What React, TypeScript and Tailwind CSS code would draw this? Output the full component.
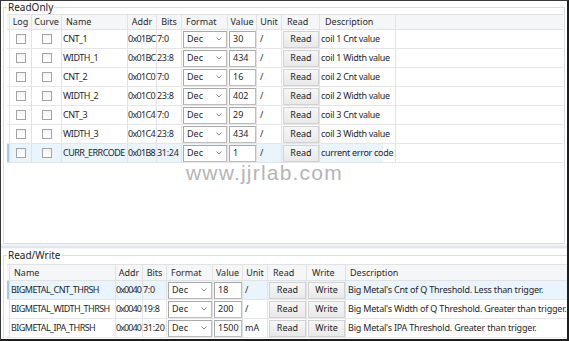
import React from 'react';

type TopRow = { name: string; addr: string; bits: string; value: string; desc: string; sel?: boolean };
type RwRow = { name: string; addr: string; bits: string; value: string; unit: string; desc: string; sel?: boolean };

const topRows: TopRow[] = [
    { name: 'CNT_1', addr: '0x01BC', bits: '7:0', value: '30', desc: 'coil 1 Cnt value' },
    { name: 'WIDTH_1', addr: '0x01BC', bits: '23:8', value: '434', desc: 'coil 1  Width value' },
    { name: 'CNT_2', addr: '0x01C0', bits: '7:0', value: '16', desc: 'coil 2 Cnt value' },
    { name: 'WIDTH_2', addr: '0x01C0', bits: '23:8', value: '402', desc: 'coil 2  Width value' },
    { name: 'CNT_3', addr: '0x01C4', bits: '7:0', value: '29', desc: 'coil 3 Cnt value' },
    { name: 'WIDTH_3', addr: '0x01C4', bits: '23:8', value: '434', desc: 'coil 3  Width value' },
    { name: 'CURR_ERRCODE', addr: '0x01B8', bits: '31:24', value: '1', desc: 'current error code', sel: true },
];

const rwRows: RwRow[] = [
    { name: 'BIGMETAL_CNT_THRSH', addr: '0x0040', bits: '7:0', value: '18', unit: '/', desc: "Big Metal's Cnt of Q Threshold. Less than trigger.", sel: true },
    { name: 'BIGMETAL_WIDTH_THRSH', addr: '0x0040', bits: '19:8', value: '200', unit: '/', desc: "Big Metal's Width of Q Threshold. Greater than trigger." },
    { name: 'BIGMETAL_IPA_THRSH', addr: '0x0040', bits: '31:20', value: '1500', unit: 'mA', desc: "Big Metal's IPA Threshold. Greater than trigger." },
];

function Check() {
    return <div className="w-[10px] h-[10px] border border-[#a3a3a3] bg-gradient-to-b from-[#f4f4f4] to-white" />;
}

function Combo() {
    return (
        <div className="flex items-center justify-between w-full h-[17px] border border-[#bdbdbd] border-t-[#a8a8a8] border-l-[#a8a8a8] bg-white pl-[3px] pr-[4px]">
            <span>Dec</span>
            <svg width="6" height="4" viewBox="0 0 6 4">
                <path d="M0.5 0.5 L3 3 L5.5 0.5" fill="none" stroke="#777" strokeWidth="0.9" />
            </svg>
        </div>
    );
}

function ValueBox({ v }: { v: string }) {
    return (
        <div className="flex items-center w-full h-[17px] border border-[#bdbdbd] border-t-[#a8a8a8] border-l-[#a8a8a8] bg-white pl-[3px]">
            {v}
        </div>
    );
}

function Btn({ label }: { label: string }) {
    return (
        <div className="flex items-center justify-center w-full h-[17px] border border-[#d2d2d2] bg-gradient-to-b from-[#f6f6f6] to-[#e9e9e9] text-[#222]">
            {label}
        </div>
    );
}

const cell = 'h-full flex items-center border-r border-[#e2e2e2] overflow-hidden whitespace-nowrap shrink-0';

function App() {
    return (
        <div className="relative w-[569px] h-[341px] bg-white border-t border-l border-[#3a3a3a] border-r-2 border-b-2 border-r-[#1e1e1e] border-b-[#1e1e1e] overflow-hidden font-['Noto_Sans',sans-serif] text-[9px] text-[#1f1f1f] flex flex-col">
            {/* ReadOnly group */}
            <fieldset className="ml-[2px] w-[562px] h-[243px] border border-[#d6dde4] pl-[3px] pr-[1px] shrink-0">
                <legend className="px-[1px] text-[10px] leading-[13px] text-[#222]">ReadOnly</legend>
                <div className="flex flex-col">
                    <div className="flex h-[16px] border-t border-b border-[#e2e2e2] bg-[#f5f6f8] text-[#2a2a2a]">
                        <div className={`${cell} w-[3px]`} />
                        <div className={`${cell} w-[22px] justify-center`}>Log</div>
                        <div className={`${cell} w-[30px] justify-center`}>Curve</div>
                        <div className={`${cell} w-[66px] pl-[4px]`}>Name</div>
                        <div className={`${cell} w-[29px] justify-center`}>Addr</div>
                        <div className={`${cell} w-[25px] justify-center`}>Bits</div>
                        <div className={`${cell} w-[46px] pl-[4px]`}>Format</div>
                        <div className={`${cell} w-[29px] justify-center`}>Value</div>
                        <div className={`${cell} w-[25px] justify-center`}>Unit</div>
                        <div className={`${cell} w-[38px] pl-[5px]`}>Read</div>
                        <div className={`${cell} w-[76px] pl-[5px]`}>Description</div>
                        <div className="flex-1" />
                    </div>
                    {topRows.map((r) => (
                        <div key={r.name} className="flex h-[19px] border-b border-[#e6e6e6]">
                            <div className={`${cell} w-[3px] ${r.sel ? 'border-l-2 border-l-[#9ccaf0] bg-[#eaf4fd]' : ''}`} />
                            <div className={`w-[373px] flex h-full ${r.sel ? 'bg-[#eaf4fd]' : ''}`}>
                                <div className={`${cell} w-[22px] justify-center`}><Check /></div>
                                <div className={`${cell} w-[30px] justify-center`}><Check /></div>
                                <div className={`${cell} w-[66px] pl-[1px] tracking-[-0.5px]`}>{r.name}</div>
                                <div className={`${cell} w-[29px] tracking-[-0.7px]`}>{r.addr}</div>
                                <div className={`${cell} w-[25px] tracking-[-0.3px]`}>{r.bits}</div>
                                <div className={`${cell} w-[46px] pl-[1px]`}><Combo /></div>
                                <div className={`${cell} w-[29px] pl-[1px]`}><ValueBox v={r.value} /></div>
                                <div className={`${cell} w-[25px] pl-[3px]`}>/</div>
                                <div className={`${cell} w-[38px] pl-[1px]`}><Btn label="Read" /></div>
                                <div className={`${cell} w-[76px] pl-[1px] tracking-[-0.3px]`}>{r.desc}</div>
                            </div>
                            <div className="flex-1" />
                        </div>
                    ))}
                </div>
            </fieldset>

            {/* splitter */}
            <div className="h-[5px] shrink-0 flex flex-col">
                <div className="h-[2px] bg-[#f1f3f5]" />
                <div className="h-[2px] bg-[#e2e6ea]" />
                <div className="h-[1px] bg-[#f4f5f7]" />
            </div>

            {/* Read/Write group */}
            <fieldset className="ml-[2px] w-[562px] flex-1 border border-[#d6dde4] border-b-0 pl-[3px] pr-[1px]">
                <legend className="px-[1px] text-[10px] leading-[13px] text-[#222]">Read/Write</legend>
                <div className="flex flex-col mt-[2px]">
                    <div className="flex h-[17px] border-t border-b border-[#e2e2e2] bg-[#f5f6f8] text-[#2a2a2a]">
                        <div className={`${cell} w-[3px]`} />
                        <div className={`${cell} w-[106px] pl-[4px]`}>Name</div>
                        <div className={`${cell} w-[27px] justify-center`}>Addr</div>
                        <div className={`${cell} w-[24px] justify-center`}>Bits</div>
                        <div className={`${cell} w-[46px] pl-[4px]`}>Format</div>
                        <div className={`${cell} w-[30px] justify-center`}>Value</div>
                        <div className={`${cell} w-[25px] justify-center`}>Unit</div>
                        <div className={`${cell} w-[39px] pl-[5px]`}>Read</div>
                        <div className={`${cell} w-[39px] pl-[5px]`}>Write</div>
                        <div className="h-full flex items-center pl-[4px] flex-1">Description</div>
                    </div>
                    {rwRows.map((r) => (
                        <div key={r.name} className={`flex h-[19px] border-b border-[#e6e6e6] ${r.sel ? 'bg-[#eaf4fd]' : ''}`}>
                            <div className={`${cell} w-[3px] ${r.sel ? 'border-l-2 border-l-[#9ccaf0]' : ''}`} />
                            <div className={`${cell} w-[106px] pl-[1px] tracking-[-0.55px]`}>{r.name}</div>
                            <div className={`${cell} w-[27px] tracking-[-0.9px]`}>{r.addr}</div>
                            <div className={`${cell} w-[24px] tracking-[-0.3px]`}>{r.bits}</div>
                            <div className={`${cell} w-[46px] pl-[1px]`}><Combo /></div>
                            <div className={`${cell} w-[30px] pl-[1px]`}><ValueBox v={r.value} /></div>
                            <div className={`${cell} w-[25px] pl-[2px]`}>{r.unit}</div>
                            <div className={`${cell} w-[39px] pl-[1px]`}><Btn label="Read" /></div>
                            <div className={`${cell} w-[39px] pl-[1px]`}><Btn label="Write" /></div>
                            <div className="h-full flex items-center pl-[2px] flex-1 whitespace-nowrap overflow-hidden tracking-[-0.2px]">{r.desc}</div>
                        </div>
                    ))}
                </div>
            </fieldset>

            {/* watermark */}
            <div className="absolute left-[185px] top-[156px] text-[21px] tracking-[1.2px] text-[#b5b5b5] font-['Liberation_Sans',sans-serif] pointer-events-none">
                www.jjrlab.com
            </div>
        </div>
    );
}

export default App;
